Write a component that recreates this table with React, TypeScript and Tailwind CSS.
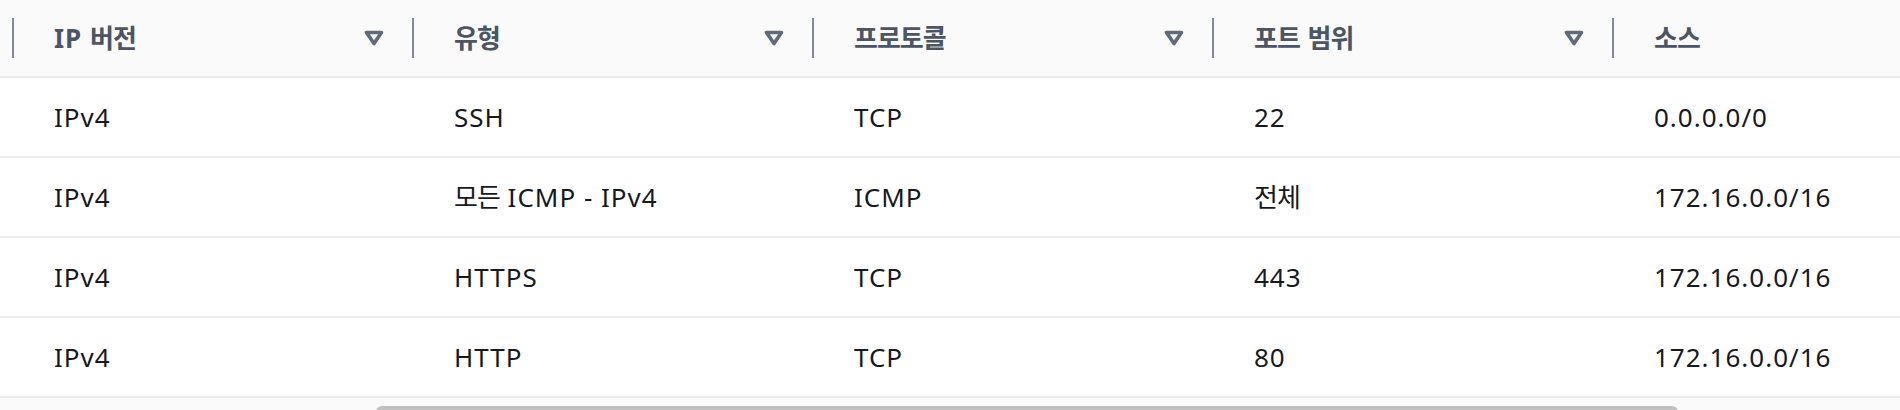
import React from "react";

const K = ({ children }: { children: React.ReactNode }) => (
  <span className="tracking-[-1px]">{children}</span>
);

const FilterIcon = () => (
  <svg width="20" height="16" viewBox="0 0 20 16" className="shrink-0">
    <path
      d="M2.5 2.5 H17.5 L10 13.5 Z"
      fill="none"
      stroke="#5f6b7a"
      strokeWidth="3.6"
      strokeLinejoin="round"
    />
  </svg>
);

const headers: React.ReactNode[] = [
  <>IP <K>버전</K></>,
  <K>유형</K>,
  <K>프로토콜</K>,
  <><K>포트</K> <K>범위</K></>,
  <K>소스</K>,
];

const rows: React.ReactNode[][] = [
  ["IPv4", "SSH", "TCP", "22", "0.0.0.0/0"],
  ["IPv4", <><K>모든</K> ICMP - IPv4</>, "ICMP", <K>전체</K>, "172.16.0.0/16"],
  ["IPv4", "HTTPS", "TCP", "443", "172.16.0.0/16"],
  ["IPv4", "HTTP", "TCP", "80", "172.16.0.0/16"],
];

export default function App() {
  return (
    <div
      className="w-[1900px] h-[410px] overflow-hidden bg-white tracking-[1px]"
      style={{ fontFamily: '"Noto Sans", "Noto Sans CJK KR", sans-serif' }}
    >
      <div className="w-[2100px]">
        <div className="flex items-center h-[78px] bg-[#fafafa] border-b-2 border-[#e9ebed] pl-[12px]">
          {headers.map((h, i) => (
            <div key={i} className="w-[400px] shrink-0 flex items-center">
              <div className="w-[2px] h-[40px] bg-[#7d8998]" />
              <div className="flex-1 pl-[40px] text-[26px] leading-[36px] font-bold text-[#4b5563]">
                {h}
              </div>
              <FilterIcon />
              <div className="w-[28px]" />
            </div>
          ))}
        </div>
        {rows.map((r, ri) => (
          <div
            key={ri}
            className="flex items-center h-[80px] border-b-2 border-[#e9ebed] pl-[12px]"
          >
            {r.map((c, ci) => (
              <div
                key={ci}
                className="w-[400px] shrink-0 pl-[42px] text-[26px] leading-[36px] text-[#16191f]"
              >
                {c}
              </div>
            ))}
          </div>
        ))}
      </div>
      <div className="h-[12px] bg-[#fafafa] pt-[8px] overflow-hidden">
        <div className="ml-[376px] w-[1302px] h-[12px] rounded-full bg-[#c1c1c1]" />
      </div>
    </div>
  );
}
